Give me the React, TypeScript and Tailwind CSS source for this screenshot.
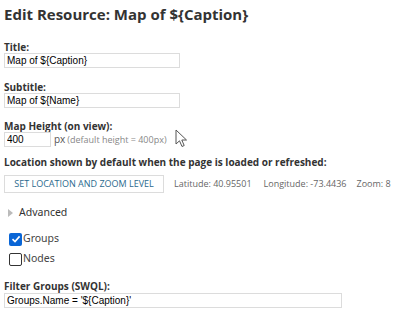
import React from "react";

const label = "block text-[10px] font-bold leading-[12px] text-[#333] [font-family:'Open_Sans',sans-serif] whitespace-nowrap";
const input = "block h-[15px] border border-[#dcdcdc] bg-white px-[2px] text-[10px] leading-[13px] text-black [font-family:'Liberation_Sans',Arial,sans-serif] outline-none";

export default function App() {
  return (
    <div className="relative h-[312px] w-[401px] overflow-hidden bg-white pl-[4px] pt-[3px] [font-family:'Open_Sans',sans-serif] text-[#333]">
      <h1 className="whitespace-nowrap text-[15px] font-bold leading-[22px] text-[#333]">Edit Resource: Map of ${"{Caption}"}</h1>

      <div className="mt-[16px]">
        <label className={label}>Title:</label>
        <input className={`${input} w-[176px]`} defaultValue="Map of ${Caption}" />
      </div>
      <div className="mt-[13px]">
        <label className={label}>Subtitle:</label>
        <input className={`${input} w-[176px]`} defaultValue="Map of ${Name}" />
      </div>
      <div className="mt-[12px]">
        <label className={label}>Map Height (on view):</label>
        <div className="flex h-[15px] items-center whitespace-nowrap">
          <input className={`${input} w-[47px]`} defaultValue="400" />
          <span className="ml-[3px] text-[10px] text-[#555]">px</span>
          <span className="ml-[2px] text-[9px] text-[#888]">(default height = 400px)</span>
        </div>
      </div>
      <div className="mt-[9px]">
        <label className={label}>Location shown by default when the page is loaded or refreshed:</label>
        <div className="mt-[7px] flex items-center whitespace-nowrap">
          <button className="h-[18px] w-[160px] border border-[#dcdcdc] bg-white text-[9px] leading-[16px] text-[#2b6a8e]">
            SET LOCATION AND ZOOM LEVEL
          </button>
          <span className="ml-[10px] text-[9px] text-[#666]">Latitude: 40.95501</span>
          <span className="ml-[12px] text-[9px] text-[#666]">Longitude: -73.4436</span>
          <span className="ml-[10px] text-[9px] text-[#666]">Zoom: 8</span>
        </div>
      </div>

      <div className="mt-[13px] flex h-[14px] items-center pl-[4px]">
        <svg width="5" height="8" viewBox="0 0 5 8"><path d="M0 0 L5 4 L0 8 Z" fill="#bbb" /></svg>
        <span className="ml-[6px] text-[10.5px] text-[#333] [font-family:'Noto_Sans',sans-serif]">Advanced</span>
      </div>

      <div className="mt-[12px] flex flex-col gap-[6px] pl-[5px] [font-family:'Noto_Sans',sans-serif]">
        <div className="flex h-[14px] items-center">
          <span className="flex h-[13px] w-[13px] items-center justify-center rounded-[2px] bg-[#0a66d6]">
            <svg width="10" height="10" viewBox="0 0 10 10"><path d="M1.5 5.2 L4 7.6 L8.6 2.4" stroke="white" strokeWidth="1.6" fill="none" /></svg>
          </span>
          <span className="ml-[1px] text-[10.5px] text-[#444]">Groups</span>
        </div>
        <div className="flex h-[14px] items-center">
          <span className="h-[13px] w-[13px] rounded-[2px] border border-[#333] bg-white" />
          <span className="ml-[1px] text-[10.5px] text-[#444]">Nodes</span>
        </div>
      </div>

      <div className="mt-[14px]">
        <label className={`${label} text-[#3a2a20]`}>Filter Groups (SWQL):</label>
        <input className={`${input} mt-[1px] w-[338px]`} defaultValue="Groups.Name = '${Caption}'" />
      </div>

      <svg className="absolute left-[175px] top-[129px]" width="14" height="20" viewBox="0 0 14 20">
        <path d="M1 1 L1 15 L4.5 11.8 L7 17.5 L9.2 16.5 L6.8 11 L11.5 11 Z" fill="white" stroke="#555" strokeWidth="1" strokeLinejoin="round" />
      </svg>
    </div>
  );
}
